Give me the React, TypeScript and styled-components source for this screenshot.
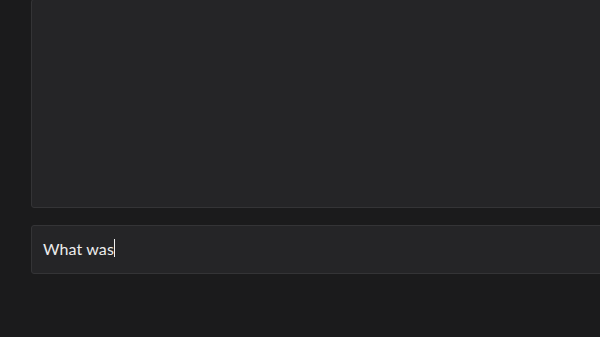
import React from "react";
import styled, { createGlobalStyle } from "styled-components";

const Global = createGlobalStyle`
  html, body { margin: 0; padding: 0; background: #1b1b1c; }
  body { font-family: Lato, "Noto Sans", sans-serif; }
`;

const Page = styled.div`
  width: 600px;
  height: 337px;
  overflow: hidden;
  background: #1b1b1c;
  display: flex;
  flex-direction: column;
  gap: 17px;
  padding-left: 31px;
  box-sizing: border-box;
`;

const Panel = styled.div`
  width: 620px;
  height: 209px;
  margin-top: -1px;
  flex-shrink: 0;
  background: #252527;
  border: 1px solid #343436;
  border-radius: 3px;
  box-sizing: border-box;
`;

const InputBox = styled.div`
  width: 620px;
  height: 49px;
  flex-shrink: 0;
  background: #252527;
  border: 1px solid #343436;
  border-radius: 3px;
  box-sizing: border-box;
  display: flex;
  align-items: center;
  padding-left: 11px;
  padding-bottom: 3px;
  color: #ececec;
  font-family: Lato, "Noto Sans", sans-serif;
  font-size: 16px;
  letter-spacing: 0.1px;
`;

const Caret = styled.span`
  display: inline-block;
  width: 1px;
  height: 18px;
  background: #f0f0f0;
  margin-left: 0px;
`;

export default function App() {
  return (
    <>
      <Global />
      <Page>
        <Panel />
        <InputBox>
          What was<Caret />
        </InputBox>
      </Page>
    </>
  );
}
